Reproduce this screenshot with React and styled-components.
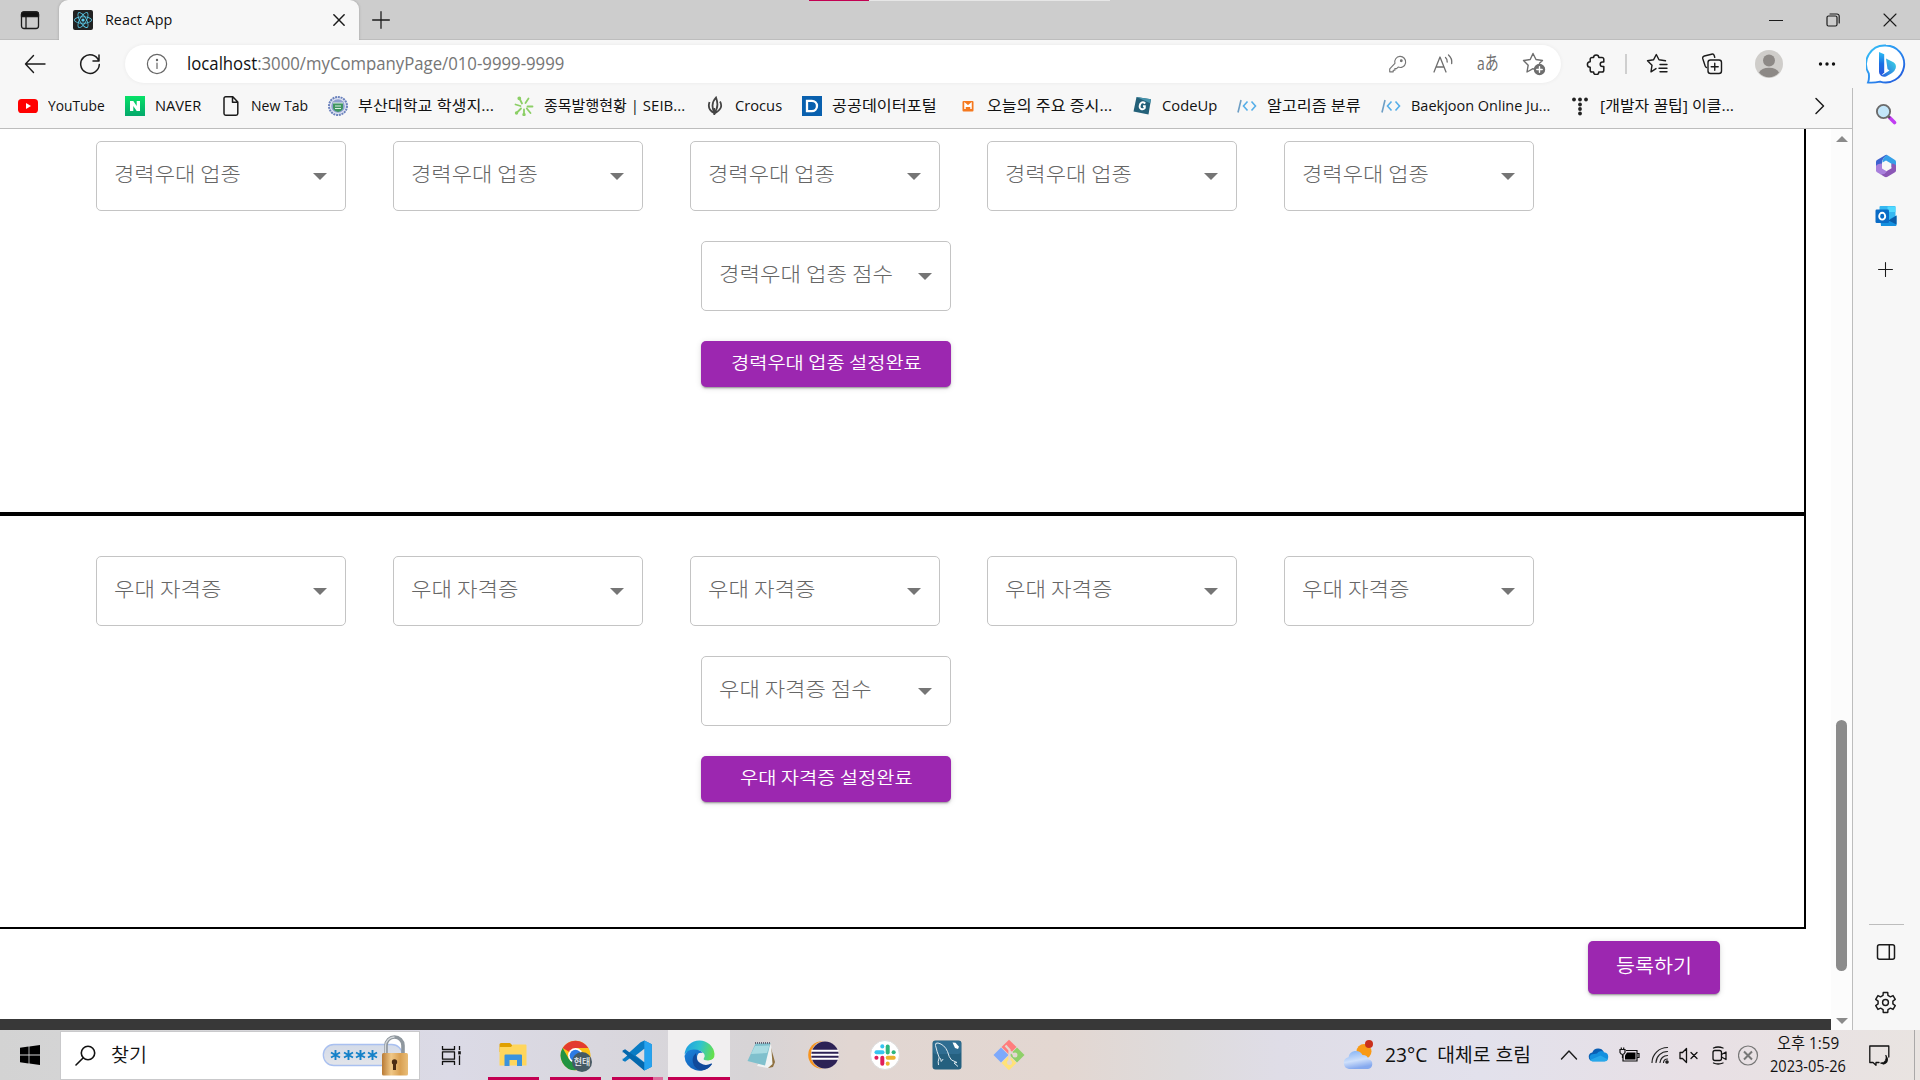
import React, { useLayoutEffect, useRef, useState } from "react";
import styled, { createGlobalStyle, css } from "styled-components";
import { FaReact } from "react-icons/fa";

const GlobalStyle = createGlobalStyle`
  * { box-sizing: border-box; }
  html, body { margin: 0; padding: 0; overflow: hidden; }
  body { font-family: "Open Sans", "Noto Sans CJK KR", sans-serif; color: #111; }
  svg { display: block; flex: none; }
`;

/* ---------- text that keeps to a given width ---------- */

const FitBox = styled.span`
  display: inline-block;
  flex: none;
  width: ${(p) => p.$w}px;
  white-space: pre;
  text-align: left;
  overflow: visible;
`;
const FitInner = styled.span`
  display: inline-block;
  transform-origin: 0 50%;
`;

function Fit({ w, children, className }) {
  const ref = useRef(null);
  const [scale, setScale] = useState(1);
  useLayoutEffect(() => {
    const natural = ref.current.offsetWidth;
    if (natural) setScale(w / natural);
  }, [w]);
  return (
    <FitBox $w={w} className={className}>
      <FitInner ref={ref} style={{ transform: `scaleX(${scale})` }}>
        {children}
      </FitInner>
    </FitBox>
  );
}

/* ---------- shell ---------- */

const Screen = styled.div`
  width: 1920px;
  height: 1080px;
  display: flex;
  flex-direction: column;
  background: #f7f7f7;
  overflow: hidden;
`;

const Slot = styled.div`
  flex: none;
  width: ${(p) => p.$w}px;
  height: ${(p) => (p.$h ? p.$h + "px" : "100%")};
  display: flex;
  align-items: center;
  justify-content: center;
`;

/* ---------- tab strip ---------- */

const TabStrip = styled.header`
  position: relative;
  height: 40px;
  flex: none;
  display: flex;
  padding: 0 2px 1px 0;
  background: #cdcdcd;
  box-shadow: inset 0 -1px 0 #bdbdbd;
`;
const LoadLine = styled.div`
  position: absolute;
  top: 0;
  left: 809px;
  width: 301px;
  height: 1px;
  background: linear-gradient(90deg, #c30052 60px, #e6e6e6 60px);
`;
const Tab = styled.div`
  width: 300px;
  height: 40px;
  background: #f7f7f7;
  border-radius: 9px 9px 0 0;
  display: flex;
  align-items: center;
  padding: 0 9px 0 14px;
  box-shadow: 0 0 3px rgba(0, 0, 0, 0.22);
  clip-path: inset(0 -4px 0 -4px);
`;
const ReactBadge = styled.div`
  width: 20px;
  height: 20px;
  margin-right: 12px;
  border-radius: 2px;
  background: #222;
  color: #5ccfee;
  display: grid;
  place-items: center;
`;
const TabTitle = styled.div`
  flex: 1;
  font-size: 15px;
  line-height: 20px;
  padding-bottom: 3px;
`;
const Grow = styled.div`
  flex: 1;
`;

/* ---------- address row ---------- */

const AddressRow = styled.div`
  height: 48px;
  flex: none;
  display: flex;
  align-items: center;
`;
const Omnibox = styled.div`
  width: 1437px;
  height: 38px;
  margin: 0 5px 0 15px;
  padding: 0 4px 0 1px;
  border-radius: 19px;
  background: #fff;
  box-shadow: 0 0 4px rgba(0, 0, 0, 0.06);
  display: flex;
  align-items: center;
`;
const Url = styled.div`
  flex: 1;
  font-size: 17.5px;
  line-height: 24px;
  color: #767676;
  padding-bottom: 3px;
  b {
    font-weight: 400;
    color: #111;
  }
`;
const Rule = styled.div`
  width: 2px;
  height: 20px;
  background: #cfcfcf;
`;
const Translate = styled.span`
  font: 400 19px/22px "Open Sans", "Noto Sans CJK JP", sans-serif;
  color: #6e6e6e;
  padding-bottom: 3px;
`;

/* ---------- body ---------- */

const Body = styled.div`
  flex: 1;
  min-height: 0;
  display: flex;
`;
const MainColumn = styled.div`
  width: 1852px;
  display: flex;
  flex-direction: column;
`;
const Bookmarks = styled.nav`
  height: 41px;
  flex: none;
  padding: 0 24px 4px 18px;
  display: flex;
  align-items: center;
  border-bottom: 1px solid #bdbdbd;
`;
const Bookmark = styled.div`
  flex: none;
  height: 36px;
  display: flex;
  align-items: center;
  gap: 10px;
  margin-right: 20px;
`;
const BookmarkLabel = styled(Fit)`
  font-size: 15px;
  line-height: 22px;
  color: #111;
  padding-bottom: 2px;
`;
const Fav = styled.div`
  width: 20px;
  height: 20px;
  flex: none;
  display: grid;
  place-items: center;
  background: ${(p) => p.$bg || "none"};
`;

const Viewport = styled.div`
  flex: 1;
  min-height: 0;
  display: flex;
  background: #fff;
`;
const Page = styled.main`
  width: 1831px;
  height: 100%;
  overflow: hidden;
  display: flex;
  flex-direction: column;
`;
const Panel = styled.section`
  flex: none;
  width: 1806px;
  height: ${(p) => p.$h}px;
  margin-top: ${(p) => p.$shift || 0}px;
  padding-top: 40px;
  border: 2px solid #000;
  border-left: none;
  display: flex;
  flex-direction: column;
  align-items: flex-start;
`;
const SelectRow = styled.div`
  display: flex;
  gap: 47px;
  margin-left: 96px;
`;
const CenterStack = styled.div`
  display: flex;
  flex-direction: column;
  gap: 30px;
  margin: 30px 0 0 701px;
`;
const SelectBox = styled.div`
  width: 250px;
  height: 70px;
  padding: 0 18px 0 17px;
  border: 1px solid #c4c4c4;
  border-radius: 5px;
  display: flex;
  justify-content: space-between;
  align-items: center;
  color: #666;
`;
const SelectLabel = styled(Fit)`
  font-family: "Noto Sans CJK KR", sans-serif;
  font-weight: 300;
  font-size: 20px;
  line-height: 28px;
  padding-bottom: 4px;
`;
const Caret = styled.i`
  width: 0;
  height: 0;
  margin-top: 1px;
  border: 7px solid transparent;
  border-top-color: #757575;
  border-bottom: none;
`;
const PurpleButton = styled.button`
  width: ${(p) => p.$w}px;
  height: ${(p) => p.$h}px;
  padding: 0 0 5px;
  border: none;
  border-radius: 5px;
  background: #9c27b0;
  color: #fff;
  font-family: "Noto Sans CJK KR", sans-serif;
  font-weight: 350;
  font-size: ${(p) => p.$fs}px;
  line-height: 26px;
  display: flex;
  align-items: center;
  justify-content: center;
  box-shadow: 0 3px 1px -2px rgba(0, 0, 0, 0.2), 0 2px 2px 0 rgba(0, 0, 0, 0.14),
    0 1px 6px 0 rgba(0, 0, 0, 0.12);
`;
const SubmitRow = styled.div`
  display: flex;
  margin: 12px 0 0 1588px;
`;
const PageFooter = styled.footer`
  margin-top: auto;
  height: 11px;
  flex: none;
  background: #383838;
`;
const Scrollbar = styled.div`
  width: 21px;
  background: #fcfcfc;
  display: flex;
  flex-direction: column;
  align-items: center;
  padding: 7px 0 6px;
`;
const Arrow = styled.i`
  width: 0;
  height: 0;
  border: 6px solid transparent;
  ${(p) =>
    p.$up
      ? css`
          border-bottom-color: #8b8b8b;
          border-top: none;
        `
      : css`
          border-top-color: #8b8b8b;
          border-bottom: none;
        `}
`;
const Thumb = styled.div`
  width: 11px;
  height: 251px;
  margin: auto 0 47px;
  border-radius: 6px;
  background: #8b8b8b;
`;
const SideBar = styled.aside`
  width: 68px;
  border-left: 1px solid #bdbdbd;
  display: flex;
  flex-direction: column;
  padding-bottom: 5px;
`;
const SideRule = styled.div`
  width: 35px;
  height: 1px;
  margin: auto auto 0;
  background: #bdbdbd;
`;

/* ---------- taskbar ---------- */

const Taskbar = styled.footer`
  height: 50px;
  flex: none;
  display: flex;
  align-items: center;
  background: linear-gradient(
    90deg,
    #d3d3d3 0,
    #d6d6d8 180px,
    #dbdae6 450px,
    #d9d7de 600px,
    #d7d4d6 750px,
    #e1d6d2 850px,
    #e3d7d1 1060px,
    #dedbdc 1180px,
    #dfdde7 1280px,
    #e2e1ec 1480px,
    #e8e0e5 1700px,
    #e9e4e1 1920px
  );
`;
const SearchBox = styled.div`
  width: 360px;
  height: 49px;
  margin-top: 1px;
  border: 1px solid #c9c9cb;
  background: #fff;
  display: flex;
  align-items: center;
  padding: 0 10px 0 14px;
`;
const SearchText = styled.div`
  flex: 1;
  margin-left: 15px;
  font: 350 19px/26px "Noto Sans CJK KR", sans-serif;
  padding-bottom: 4px;
`;
const AppCell = styled.div`
  width: 62px;
  height: 50px;
  flex: none;
  position: relative;
  display: grid;
  place-items: center;
  background: ${(p) => (p.$active ? "#f1eff0" : "none")};
`;
const RunMark = styled.div`
  position: absolute;
  bottom: 0;
  left: ${(p) => (p.$wide ? 0 : 6)}px;
  right: ${(p) => (p.$wide ? 0 : 5)}px;
  height: 3px;
  background: ${(p) =>
    p.$split ? "linear-gradient(90deg, #c30052 41px, #dd6c9c 41px)" : "#c30052"};
`;
const ChromeTag = styled.span`
  position: absolute;
  left: 28px;
  top: 22px;
  width: 20px;
  height: 20px;
  border-radius: 50%;
  background: #455a64;
  color: #e8ecee;
  font: 500 9px/19px "Noto Sans CJK KR", sans-serif;
  text-align: center;
`;
const Weather = styled.div`
  display: flex;
  align-items: center;
  gap: 12px;
  margin-right: 20px;
  font-size: 19.5px;
  line-height: 28px;
`;
const Clock = styled.div`
  width: 84px;
  margin-left: 3px;
  display: flex;
  flex-direction: column;
  align-items: center;
  font-size: 15.5px;
  line-height: 23px;
`;
const DesktopEdge = styled.div`
  width: 1px;
  height: 50px;
  margin: 0 5px 0 6px;
  background: #aaa8a8;
`;

/* ---------- icons ---------- */

const Line = ({ s = 20, w = 1.3, c = "#1b1b1b", vb = 20, children, ...rest }) => (
  <svg
    width={s}
    height={s}
    viewBox={`0 0 ${vb} ${vb}`}
    fill="none"
    stroke={c}
    strokeWidth={w}
    strokeLinecap="round"
    strokeLinejoin="round"
    {...rest}
  >
    {children}
  </svg>
);

const TabActions = () => (
  <Line>
    <rect x="1.5" y="2" width="17" height="16.5" rx="2.5" />
    <path d="M1.5 6.5V4.5A2.5 2.5 0 0 1 4 2h12a2.5 2.5 0 0 1 2.500 2.500v2Z" fill="#111" />
    <path d="M6 7v11" />
  </Line>
);
const Back = () => (
  <Line s={22} vb={22} w={1.4}>
    <path d="M21 11H1.500M9.500 2.500 1.500 11l8 8.500" />
  </Line>
);
const Refresh = () => (
  <Line s={22} vb={22} w={1.5}>
    <path d="M19.800 8A9.300 9.300 0 1 0 20.300 11.500M20 2v6h-6" />
  </Line>
);
const Info = () => (
  <Line s={22} vb={22} w={1.2} c="#666">
    <circle cx="11" cy="11" r="9.600" />
    <path d="M11 10v5.500" />
    <circle cx="11" cy="7" r=".6" fill="#666" />
  </Line>
);
const Key = () => (
  <Line s={19} c="#767676" w={1.200}>
    <path d="M12.500 1.500a5.800 5.800 0 1 1-1.800 11.200L9 14.300H7.200V16H5.500v1.700H1.800v-3.200l5.500-5.600A5.800 5.800 0 0 1 12.500 1.500Z" />
    <circle cx="14" cy="6" r=".9" fill="#767676" />
  </Line>
);
const ReadAloud = () => (
  <Line c="#6e6e6e" w={1.300}>
    <path d="M1 18 7 3l6 15M3 13h8M12.500 3.500q2 1.700 1.700 4.500M15.500 1q3.800 3.300 3.200 8.500" />
  </Line>
);
const StarAdd = () => (
  <Line s={24} vb={24} c="#6e6e6e" w={1.400}>
    <path d="M12.500 17.500 11 16.700 5 20l1.200-6.800L1.500 8.500l6.700-1L11 1.500l3 6 6.500 1-3 2.800" />
    <circle cx="17.500" cy="17.500" r="5" fill="#6e6e6e" />
    <path d="M17.500 14.800v5.400M14.800 17.500h5.400" stroke="#fff" />
  </Line>
);
const Puzzle = () => (
  <Line s={22} vb={22} w={1.500}>
    <path d="M7 4.500h1.600a2.600 2.600 0 0 1 5.200 0H17A1.800 1.800 0 0 1 18.800 6.300V9h-1.300a2.300 2.300 0 0 0 0 4.600h1.300v3.600A1.800 1.800 0 0 1 17 19h-3.200a2.600 2.600 0 0 1-5.200 0H7a1.800 1.800 0 0 1-1.800-1.800V14.300a2.800 2.800 0 0 1 0-5.600V6.300A1.800 1.800 0 0 1 7 4.500Z" />
  </Line>
);
const Favorites = () => (
  <Line s={22} vb={22} w={1.400}>
    <path d="M10 15.600 5 18.800l1-6.600L1.500 7.800l6-1L10.300 1.500 13 6.800l6.500 1M14 11.500h7M13 15.200h8M14 18.800h7" />
  </Line>
);
const Collections = () => (
  <Line s={22} vb={22} w={1.400}>
    <path d="M5.500 14.500A2.500 2.500 0 0 1 4 12.500L1.800 5.800A2.300 2.300 0 0 1 3.300 3L10.500 1.200a2.300 2.300 0 0 1 2.800 1.600l.4 1.500" />
    <rect x="7" y="7" width="13.500" height="13.500" rx="2.500" />
    <path d="M13.750 10.200v7M10.200 13.750h7" />
  </Line>
);
const Avatar = () => (
  <svg width="28" height="28" viewBox="0 0 28 28">
    <circle cx="14" cy="14" r="14" fill="#cfcdca" />
    <circle cx="14" cy="10.500" r="6" fill="#8d8986" />
    <path d="M4 22.500a10.500 7 0 0 1 20 0A13 13 0 0 1 4 22.500Z" fill="#8d8986" />
  </svg>
);
const Dots = () => (
  <svg width="18" height="4" viewBox="0 0 18 4" fill="#111">
    <circle cx="2.500" cy="2" r="1.700" />
    <circle cx="9" cy="2" r="1.700" />
    <circle cx="15.500" cy="2" r="1.700" />
  </svg>
);
const Bing = () => (
  <svg width="40" height="40" viewBox="0 0 40 40">
    <defs>
      <linearGradient id="bingRing" x1="0" y1="0" x2="1" y2="1">
        <stop offset="0" stopColor="#36c5f6" />
        <stop offset=".5" stopColor="#2a8cf0" />
        <stop offset="1" stopColor="#2353d8" />
      </linearGradient>
      <linearGradient id="bingB" x1="0" y1="0" x2="0" y2="1">
        <stop offset="0" stopColor="#2fc0f4" />
        <stop offset=".5" stopColor="#1b6fe4" />
        <stop offset="1" stopColor="#2a56dc" />
      </linearGradient>
      <linearGradient id="bingC" x1="0" y1="1" x2="1" y2="0">
        <stop offset="0" stopColor="#2558de" />
        <stop offset="1" stopColor="#3edbe6" />
      </linearGradient>
    </defs>
    <path d="M20 1.500A18.500 18.500 0 1 1 14 37.600Q8 39 2 38.500q1.500-3.500.8-9A18.500 18.500 0 0 1 20 1.500Z" fill="#fff" stroke="url(#bingRing)" strokeWidth="1.900" />
    <path d="M13 8l5.200 2.200v18.300L15.200 31.500q-2.200-.8-2.200-3.500Z" fill="url(#bingB)" />
    <path d="M20 14.500l7.500 3.800q3.200 2 2.200 6-1 3.200-3.700 4.700L20.500 32.300q-4 1.500-6.500-1.500 2.200.6 4-.8l5.500-3.500-2-1.500Z" fill="url(#bingC)" />
  </svg>
);
const Cross = ({ s = 13, w = 1.200 }) => (
  <Line s={s} vb={14} w={w}>
    <path d="M1 1l12 12M13 1 1 13" />
  </Line>
);
const Plus = ({ s = 17 }) => (
  <Line s={s} vb={17} w={1.200}>
    <path d="M8.500.6v15.800M.6 8.500h15.800" />
  </Line>
);
const Restore = () => (
  <Line s={14} vb={14} w={1.200}>
    <rect x="1" y="3" width="10" height="10" rx="1.500" />
    <path d="M4 1h7a2.200 2.200 0 0 1 2.200 2.200V10" />
  </Line>
);

/* favicons */
const YouTube = () => (
  <svg width="20" height="20" viewBox="0 0 20 20">
    <rect y="3" width="20" height="14" rx="3.600" fill="#f00" />
    <path d="M8 7l5 3-5 3Z" fill="#fff" />
  </svg>
);
const Naver = () => (
  <svg width="10" height="10" viewBox="0 0 10 10">
    <path d="M0 0h3.300l3.400 5V0H10v10H6.700L3.300 5v5H0Z" fill="#fff" />
  </svg>
);
const PageIcon = () => (
  <Line w={1.500}>
    <path d="M4.500.8h7.300l5 5.200v11.500a1.700 1.700 0 0 1-1.700 1.700H4.700A1.700 1.700 0 0 1 3 17.500V2.500A1.700 1.700 0 0 1 4.700.8ZM11.500 1v5.300h5" />
  </Line>
);
const Univ = () => (
  <svg width="20" height="20" viewBox="0 0 20 20">
    <circle cx="10" cy="10" r="9" fill="#dfe4f2" stroke="#6b82bd" strokeWidth="2" strokeDasharray="2 .8" />
    <circle cx="10" cy="10" r="6.800" fill="#8fa0cf" />
    <path d="M5 7h10v4.500q0 3-5 4.500-5-1.500-5-4.500Z" fill="#3f9560" />
    <path d="M5 7h10M7 10h6M7 12.500h6" stroke="#dcefe2" strokeWidth="1" />
  </svg>
);
const Splash = () => (
  <svg width="20" height="20" viewBox="0 0 20 20" stroke="#8ccf66" strokeWidth="1.800" strokeLinecap="round" fill="#7cc84e">
    <path d="M8 7.500 5.500 2.500M11.500 7l3-4.500M6.500 10 1.500 8.500M7 12.500l-4.500 4.500M10 13.500v5.500M12.800 12.500l3.700 4.500M13.500 10.500h5" fill="none" />
    <circle cx="5.300" cy="2.300" r="1" />
    <circle cx="2.500" cy="17" r=".8" />
    <circle cx="10" cy="18.500" r=".8" />
  </svg>
);
const Crocus = () => (
  <svg width="20" height="20" viewBox="0 0 20 20" fill="none" stroke="#444" strokeWidth="1.800">
    <path d="M11 1.500Q5 8 9.300 16.500 14.500 11 11 1.500ZM4.500 6q-2.500 7.500 4.500 11M15 5.500q4 7-5.500 12" />
    <path d="M9.300 12v7" />
  </svg>
);
const DataPortal = () => (
  <svg width="14" height="14" viewBox="0 0 14 14">
    <path d="M2 1.800h4.800a5.200 5.200 0 0 1 0 10.400H2Z" fill="none" stroke="#fff" strokeWidth="2.300" />
  </svg>
);
const MNews = () => (
  <svg width="20" height="20" viewBox="0 0 20 20">
    <rect x="5.500" y="5" width="11" height="10.500" rx="1" fill="#f5791f" />
    <path d="M8 13V7.500l3 2.500 3-2.500V13M8 10.300h6" stroke="#fff" strokeWidth="1.500" fill="none" />
  </svg>
);
const CodeUp = () => (
  <svg width="20" height="20" viewBox="0 0 20 20">
    <path d="M4.500 1l14.500 2.300L16.500 18.500 1.500 15.500Z" fill="#236078" />
    <path d="M4.500 1l14.500 2.300-.8 4Z" fill="#4793ac" />
    <path d="M13.300 7.500Q10.500 5 8.500 7.500q-2 4 .5 5.500 2.500 1 3.800-1V10.200H11" stroke="#fff" strokeWidth="1.900" fill="none" />
  </svg>
);
const Baekjoon = () => (
  <svg width="20" height="20" viewBox="0 0 20 20" fill="none" strokeWidth="1.600">
    <path d="M4 4 1 16.500" stroke="#6d9ec4" />
    <path d="M10.500 5.500 6.500 10l4 4.500M14.500 5.500l4 4.500-4 4.500" stroke="#55aee8" />
  </svg>
);
const Tistory = () => (
  <svg width="20" height="20" viewBox="0 0 20 20" fill="#222">
    {[[4, 4], [10, 4], [16, 4], [10, 9], [10, 13.500], [10, 18]].map(([x, y]) => (
      <circle key={x + "-" + y} cx={x} cy={y - 0.500} r="1.900" />
    ))}
  </svg>
);

/* sidebar icons */
const Magnifier = () => (
  <svg width="22" height="22" viewBox="0 0 22 22">
    <path d="M14.500 14.500l5 5" stroke="#c13df2" strokeWidth="3.600" strokeLinecap="round" />
    <path d="M12.500 12.500l2.500 2.500" stroke="#555" strokeWidth="2" />
    <circle cx="8.500" cy="8.500" r="6.600" fill="#c3e6fa" stroke="#6b6b6b" strokeWidth="1.900" />
  </svg>
);
const M365 = () => (
  <svg width="22" height="24" viewBox="0 0 22 24">
    <path d="M10.500 1 2 6Q1 6.700 1 8v8.500q3.200 1.500 6-.8V8.500Q7.500 3 13 1.300 11.700.4 10.500 1Z" fill="#3c62cf" />
    <path d="M11 1.500Q7.500 4 7.500 8.500l3.500-2 5.500 3.300V13q3 2.500 4.500 4V8q0-1.300-1-2l-7-4.500Q12 .8 11 1.500Z" fill="#35a0e8" />
    <path d="M21 12v4.500q0 1-1 1.700l-7.500 4.600q-1.500.8-3 0L5 20q4 .8 6-2.500l5.500-3.200V9.500Q21 10 21 12Z" fill="#8b57b6" />
    <path d="M1 12q1-2.500 6-2.500v5l5 3q-2.500 3.500-7 2.500L2 18.200q-1-.7-1-1.700Z" fill="#a87fdc" />
    <circle cx="11" cy="12" r="3.700" fill="#f7f7f7" />
  </svg>
);
const Outlook = () => (
  <svg width="22" height="22" viewBox="0 0 22 22">
    <rect x="4.500" y="1" width="16" height="13" rx="1" fill="#35b8f1" />
    <path d="M12.500 1.500h8V7h-8Z" fill="#50d9ff" />
    <path d="M5 11l8 4 8.500-4.500V20a1 1 0 0 1-1 1H6Z" fill="#1490df" />
    <path d="M13.500 15.500l8-5v9Z" fill="#0a5ca8" />
    <rect x=".5" y="4.500" width="13.500" height="13.500" rx="1.200" fill="#0a6cc6" />
    <ellipse cx="7.200" cy="11.200" rx="3" ry="3.400" fill="none" stroke="#fff" strokeWidth="1.900" />
  </svg>
);
const SidePanel = () => (
  <Line s={20} vb={20} w={1.500}>
    <rect x="1.500" y="2.800" width="17" height="14.400" rx="2" />
    <path d="M13.300 3v14" />
  </Line>
);
const gearPath = (() => {
  const pts = [];
  for (let i = 0; i < 6; i++) {
    const a = (i * Math.PI) / 3 - Math.PI / 2;
    const at = (r, d) => `${(11 + r * Math.cos(a + d)).toFixed(2)} ${(11 + r * Math.sin(a + d)).toFixed(2)}`;
    pts.push(at(9.800, -0.220), at(9.800, 0.220), at(7.200, 0.330), at(7.200, 0.710));
  }
  return "M" + pts.join("L") + "Z";
})();
const Gear = () => (
  <Line s={23} vb={22} w={1.400}>
    <path d={gearPath} />
    <circle cx="11" cy="11" r="2.800" />
  </Line>
);

/* taskbar icons */
const Windows = () => (
  <svg width="20" height="20" viewBox="0 0 20 20" fill="#000">
    <path d="M0 2.800 8.600 1.600V9.600H0ZM9.400 1.500 20 0V9.600H9.400ZM0 10.400H8.600V18.400L0 17.200ZM9.400 10.400H20V20L9.400 18.500Z" />
  </svg>
);
const SearchIcon = () => (
  <Line s={21} vb={21} w={1.600} c="#111">
    <circle cx="13" cy="8" r="6.700" />
    <path d="M8.300 12.700 1 20" />
  </Line>
);
const LockArt = () => (
  <svg width="87" height="42" viewBox="0 0 87 42">
    <defs>
      <linearGradient id="lockBody" x1="0" x2="1">
        <stop offset="0" stopColor="#b87a35" />
        <stop offset=".35" stopColor="#f0c887" />
        <stop offset=".7" stopColor="#d9a052" />
        <stop offset="1" stopColor="#e9bd78" />
      </linearGradient>
      <linearGradient id="pill" x1="0" y1="0" x2="0" y2="1">
        <stop offset="0" stopColor="#d4dbe8" />
        <stop offset="1" stopColor="#e3e5ea" />
      </linearGradient>
    </defs>
    <rect x="1.300" y="9.500" width="79" height="21" rx="10.500" fill="url(#pill)" stroke="#a9c0f0" strokeWidth="1.300" />
    {[13.500, 26.500, 38.500, 50.500].map((x) => (
      <g key={x} stroke="#1481c8" strokeWidth="1.900">
        <path d={`M${x} 15v10M${x - 4.500} 17.500l9 5M${x - 4.500} 22.500l9-5`} />
      </g>
    ))}
    <path d="M64 18.500v-8a8.500 8.500 0 0 1 17 0v8" fill="none" stroke="#8f979e" strokeWidth="3.600" />
    <path d="M63.500 18.500v-8a9 9 0 0 1 9-8.500" fill="none" stroke="#d6dade" strokeWidth="1.300" />
    <rect x="60" y="18" width="26" height="22.500" rx="1.500" fill="url(#lockBody)" />
    <circle cx="72.500" cy="27" r="2.700" fill="#4c2c12" />
    <path d="M71 27h3v8h-3Z" fill="#4c2c12" />
  </svg>
);
const TaskView = () => (
  <Line s={21} vb={21} w={1.300} c="#111" strokeLinecap="butt">
    <path d="M1.500 1v3.500H13.500V1M1.500 20v-3.500H13.500V20M1.500 6.800H13.500v7.400H1.500ZM18.500 1v4M18.500 10.500V20" />
    <path d="M18.500 6.200v3.200" strokeWidth="2.600" />
  </Line>
);
const Folder = () => (
  <svg width="30" height="30" viewBox="0 0 30 30">
    <path d="M1.500 4.500q0-1.500 1.500-1.500h9l2.500 2.500V12H1.500Z" fill="#e0a000" />
    <path d="M1.500 7H13l2-2.500h12.500q1 0 1 1V25.500h-27Z" fill="#ffd65c" />
    <path d="M6.500 26V15.500q0-1 1-1H23q1 0 1 1V26h-5v-6h-7.500v6Z" fill="#3b93dd" />
  </svg>
);
const Chrome = () => (
  <svg width="31" height="31" viewBox="0 0 48 48">
    <circle cx="24" cy="24" r="23" fill="#fbc116" />
    <path d="M24 24 4.080 12.500A23 23 0 0 1 43.900 12.500H24Z" fill="#e33b2e" />
    <path d="M4.080 12.500A23 23 0 0 0 24 47l10-17.300L14 29.700Z" fill="#229342" />
    <path d="M43.900 12.500H24l10 17.300L24 47A23 23 0 0 0 43.900 12.500Z" fill="#fbc116" />
    <circle cx="24" cy="24" r="11.500" fill="#fff" />
    <circle cx="24" cy="24" r="9" fill="#2c7be5" />
  </svg>
);
const VSCode = () => (
  <svg width="31" height="31" viewBox="0 0 100 100">
    <path d="M72 2 96 13.500V86.500L72 98 28 57 10 70.500 2 66.500V60L60 7Z" fill="#0a7cc4" />
    <path d="M2 33.500 10 29.500 72 74V98L2 40Z" fill="#0468ad" />
    <path d="M72 2 96 13.500V86.500L72 98Z" fill="#26a3f0" />
    <path d="M72 28 44 50 72 72Z" fill="#dcdbe1" />
    <path d="M2 38 17 50 2 62Z" fill="#dcdbe1" />
  </svg>
);
const Edge = () => (
  <svg width="31" height="31" viewBox="0 0 31 31">
    <defs>
      <linearGradient id="edgeTop" x1="0" y1=".3" x2="1" y2=".5">
        <stop offset="0" stopColor="#1f9fe3" />
        <stop offset=".5" stopColor="#30c4cd" />
        <stop offset="1" stopColor="#65e04c" />
      </linearGradient>
      <linearGradient id="edgeLow" x1="0" y1="0" x2="1" y2="1">
        <stop offset="0" stopColor="#1b84dc" />
        <stop offset="1" stopColor="#0f4fa8" />
      </linearGradient>
    </defs>
    <path d="M.6 14.500A15 15 0 0 1 30.500 14q.3 6-6.500 6.500-3.500 0-4.800-1.300 2-2 1-4.700-1.800-4-7-4.500Q4.500 9.500.6 14.500Z" fill="url(#edgeTop)" />
    <path d="M.5 16Q2.500 9 10.500 9.500q6 .3 8.300 3.500-4-.5-5.500 3-1.500 7 5.500 9.500 4 1.300 9-1.300A15 15 0 0 1 .5 16Z" fill="url(#edgeLow)" />
    <path d="M12 13Q6.500 18 10 25.500q2.500 4 7 5 7-.5 11-6.300.2-1-.8-.6-4 2-8 1Q12 22 12.500 16Z" fill="#104a9b" />
    <path d="M13.500 17q-.5-4.500 4-4.200 3.800.6 2.800 4.200l-1.200 2.200q1.500 2 5.500 1.700 3.500-.5 5-2-1 3.500-4.500 4.800-8 2.300-11.600-6.700Z" fill="#f1eff0" />
  </svg>
);
const Notepad = () => (
  <svg width="30" height="30" viewBox="0 0 30 30">
    <path d="M24 4.500 29 22l-2 5-5 1Z" fill="#8f7140" />
    <path d="M25 4l1.500 20-4.500 4-11-2Z" fill="#f0f3f3" />
    <path d="M9.500 3.500 24.500 3 19 25.500 1.500 21Z" fill="#7fc0cd" />
    <path d="M9 6 23.500 5.500 21 13 5 14Z" fill="#a9dbe2" />
    <path d="M9 3h16" stroke="#667" strokeWidth="1.800" strokeDasharray="1 1" />
  </svg>
);
const Eclipse = () => (
  <svg width="31" height="28" viewBox="0 0 31 28">
    <ellipse cx="14" cy="14" rx="13.800" ry="13.800" fill="#f7941e" />
    <circle cx="17" cy="14" r="14" fill="#e0d6d5" />
    <circle cx="17" cy="14" r="13.600" fill="#2c2255" />
    <path d="M3.500 9.800h27M3 13.800h28M3.500 17.800h27" stroke="#fff" strokeWidth="1.900" />
  </svg>
);
const Slack = () => (
  <svg width="30" height="30" viewBox="0 0 30 30">
    <circle cx="15" cy="15" r="14.500" fill="#fff" stroke="#ddd" />
    <g strokeWidth="4" strokeLinecap="round">
      <path d="M6.500 12.300h6" stroke="#36c5f0" />
      <path d="M12.300 6.300v.1" stroke="#36c5f0" />
      <path d="M17.700 6.500v6" stroke="#2eb67d" />
      <path d="M23.600 12.300h.1" stroke="#2eb67d" />
      <path d="M17.700 17.700h6" stroke="#ecb22e" />
      <path d="M17.700 23.600v.1" stroke="#ecb22e" />
      <path d="M12.300 17.700v6" stroke="#e01e5a" />
      <path d="M6.400 17.700h.1" stroke="#e01e5a" />
    </g>
  </svg>
);
const MySQL = () => (
  <svg width="30" height="30" viewBox="0 0 30 30">
    <rect x=".5" y=".5" width="29" height="29" rx="3" fill="#25607f" />
    <rect x="1" y="1" width="28" height="13" rx="3" fill="#2f6d91" />
    <path d="M6.500 25q-1-3 .7-7.500Q5 12 3.500 5.500 3 2.500 6 3q6.500 1.500 9.500 8.500 1.500 6 4 8.500l5.500 2.500-3 .5 4 3.500M7.200 17.500q2 1 2 4l2-2.500" fill="none" stroke="#dfeaf0" strokeWidth="1" />
    <path d="M20.500 2.500l3 .3 3.500 4-1 2.200-3-1Z" fill="#fff" />
  </svg>
);
const GitDiamond = () => (
  <svg width="32" height="32" viewBox="0 0 32 32">
    <path d="M16 .8 23.500 8 16 15.500 8.500 8Z" fill="#ff7d7d" />
    <path d="M24 8.500 31.500 16 24 23.500 16.500 16Z" fill="#8fd069" />
    <path d="M16 16.500 23.500 24 16 31.300 8.500 24Z" fill="#ffe278" />
    <path d="M8 8.500 15.500 16 8 23.500.5 16Z" fill="#7da9fb" />
    <path d="M12.500 6.500 16.500 11v13M16.500 12l5 4" fill="none" stroke="#e3d7d1" strokeWidth="2.200" />
    <circle cx="16.500" cy="23.500" r="2.500" fill="#e3d7d1" />
    <circle cx="22" cy="16" r="2.500" fill="#e3d7d1" />
  </svg>
);
const Cloudy = () => (
  <svg width="30" height="30" viewBox="0 0 30 30">
    <defs>
      <linearGradient id="cloud" x1="0" y1="0" x2=".3" y2="1">
        <stop offset="0" stopColor="#7fb0f4" />
        <stop offset=".6" stopColor="#cfe0fb" />
        <stop offset="1" stopColor="#86a9ee" />
      </linearGradient>
    </defs>
    <circle cx="21" cy="11.500" r="7.500" fill="#f99a16" />
    <path d="M6 29a6 6 0 0 1-.5-11.800A7.500 7.500 0 0 1 19.500 15a6 6 0 0 1 6 4.200A5 5 0 0 1 25 29Z" fill="url(#cloud)" />
    <circle cx="26" cy="4" r="4" fill="#c9301c" />
  </svg>
);
const OneDrive = () => (
  <svg width="21" height="14" viewBox="0 0 21 14">
    <path d="M4.500 13A4.300 4.300 0 0 1 4.300 4.500 6.300 6.300 0 0 1 15.800 4l-6 6Z" fill="#0a5fb4" />
    <path d="M9 5.500a4.500 4.500 0 0 1 7-1.300A4.600 4.600 0 0 1 16.500 13.300H4.500A4 4 0 0 1 3 6.500Z" fill="#1490df" />
    <path d="M2 12 12.500 7.500l7.500 4q-1 2-3.500 2H4.500Q3 13.300 2 12Z" fill="#28a8ea" />
  </svg>
);
const Battery = () => (
  <svg width="22" height="16" viewBox="0 0 22 16" fill="none" stroke="#111" strokeWidth="1.200">
    <path d="M7 3.500h11v10.500H4V8M18.500 6.500h1.500v4h-1.500" />
    <path d="M8 5.500h8.500v7H6V8.500Z" fill="#000" stroke="none" />
    <path d="M1 2.500h5v3q-1 2-2.500 2T1 5.500ZM2.300.5v2M4.700.5v2M3.500 7.500V11" />
  </svg>
);
const Wifi = () => (
  <Line s={18} vb={18} w={1.200} c="#222">
    <path d="M1 16.500A15.500 15.500 0 0 1 16.500 1.500M5 16.500A11.500 11.500 0 0 1 16.500 5.500M9 16.500a7.500 7.500 0 0 1 7.500-7M12.500 16.500a4 4 0 0 1 4-3.500" />
    <circle cx="16" cy="16" r="1.200" fill="#111" />
  </Line>
);
const Mute = () => (
  <Line s={19} vb={19} w={1.300} c="#111">
    <path d="M1 6.500h2.500L7.500 2.500v14l-4-4H1ZM12 6.500l6 6M18 6.500l-6 6" />
  </Line>
);
const MeetCam = () => (
  <Line s={19} vb={19} w={1.300} c="#111">
    <rect x="3" y="4.500" width="8.500" height="10" rx="2" />
    <path d="M11.500 8.500 16 6v7.500l-4.500-2.500M3.500 2Q8 0 13 2M3.500 17Q8 19 13 17" />
  </Line>
);
const Offline = () => (
  <svg width="21" height="21" viewBox="0 0 21 21" fill="none" stroke="#777">
    <circle cx="10" cy="10.500" r="9.500" strokeWidth="1.200" />
    <path d="M6 6.500l8 8M14 6.500l-8 8" strokeWidth="2" />
  </svg>
);
const Notice = () => (
  <Line s={21} vb={21} w={1.300} c="#111">
    <path d="M10 17.500H7v2.800l-3-2.800H.8V1h19v11" />
    <path d="M17 10.500q3 3.500.8 7-2.800 3-6.300.6 3.500-.2 4.800-2.400 1.300-2.400.7-5.200Z" fill="#111" strokeWidth=".8" />
  </Line>
);

/* ---------- data ---------- */

const bookmarks = [
  { label: "YouTube", w: 57, icon: <YouTube /> },
  { label: "NAVER", w: 46, icon: <Naver />, bg: "linear-gradient(#07e268, #04a86b)" },
  { label: "New Tab", w: 57, icon: <PageIcon /> },
  { label: "부산대학교 학생지...", w: 136, icon: <Univ /> },
  { label: "종목발행현황 | SEIB...", w: 141, icon: <Splash /> },
  { label: "Crocus", w: 47, icon: <Crocus /> },
  { label: "공공데이터포털", w: 105, icon: <DataPortal />, bg: "#0960ae" },
  { label: "오늘의 주요 증시...", w: 125, icon: <MNews /> },
  { label: "CodeUp", w: 55, icon: <CodeUp /> },
  { label: "알고리즘 분류", w: 94, icon: <Baekjoon /> },
  { label: "Baekjoon Online Ju...", w: 139, icon: <Baekjoon /> },
  { label: "[개발자 꿀팁] 이클...", w: 134, icon: <Tistory /> },
];

const apps = [
  { id: "files", icon: <Folder />, run: true },
  { id: "chrome", icon: <Chrome />, run: true, tag: "현태" },
  { id: "code", icon: <VSCode />, run: true, split: true },
  { id: "edge", icon: <Edge />, run: true, active: true },
  { id: "notepad", icon: <Notepad /> },
  { id: "eclipse", icon: <Eclipse /> },
  { id: "slack", icon: <Slack /> },
  { id: "mysql", icon: <MySQL /> },
  { id: "git", icon: <GitDiamond /> },
];

function Select({ label, w }) {
  return (
    <SelectBox>
      <SelectLabel w={w}>{label}</SelectLabel>
      <Caret />
    </SelectBox>
  );
}

function Preference({ label, labelW, scoreW, doneW, height, shift }) {
  return (
    <Panel $h={height} $shift={shift}>
      <SelectRow>
        {[0, 1, 2, 3, 4].map((i) => (
          <Select key={i} label={label} w={labelW} />
        ))}
      </SelectRow>
      <CenterStack>
        <Select label={`${label} 점수`} w={scoreW} />
        <PurpleButton $w={250} $h={46} $fs={17.5}>
          <Fit w={doneW}>{`${label} 설정완료`}</Fit>
        </PurpleButton>
      </CenterStack>
    </Panel>
  );
}

export default function App() {
  return (
    <Screen>
      <GlobalStyle />
      <TabStrip>
        <LoadLine />
        <Slot $w={59}><TabActions /></Slot>
        <Tab>
          <ReactBadge><FaReact size={18} /></ReactBadge>
          <TabTitle><Fit w={67}>React App</Fit></TabTitle>
          <Slot $w={22}><Cross s={12} w={1.700} /></Slot>
        </Tab>
        <Slot $w={43}><Plus s={18} /></Slot>
        <Grow />
        <Slot $w={57}>
          <Line s={14} vb={14} w={1.200}><path d="M.5 7.500h13" /></Line>
        </Slot>
        <Slot $w={57}><Restore /></Slot>
        <Slot $w={57}><Cross s={14} w={1.100} /></Slot>
      </TabStrip>

      <AddressRow>
        <Slot $w={70}><Back /></Slot>
        <Slot $w={40}><Refresh /></Slot>
        <Omnibox>
          <Slot $w={61}><Info /></Slot>
          <Url>
            <Fit w={377}><b>localhost</b>:3000/myCompanyPage/010-9999-9999</Fit>
          </Url>
          <Slot $w={46}><Key /></Slot>
          <Slot $w={46}><ReadAloud /></Slot>
          <Slot $w={44}><Translate><Fit w={22}>aあ</Fit></Translate></Slot>
          <Slot $w={47}><StarAdd /></Slot>
        </Omnibox>
        <Slot $w={59}><Puzzle /></Slot>
        <Rule />
        <Slot $w={60}><Favorites /></Slot>
        <Slot $w={49}><Collections /></Slot>
        <Slot $w={66}><Avatar /></Slot>
        <Slot $w={50}><Dots /></Slot>
        <Slot $w={68}><Bing /></Slot>
      </AddressRow>

      <Body>
        <MainColumn>
          <Bookmarks>
            {bookmarks.map((b) => (
              <Bookmark key={b.label}>
                <Fav $bg={b.bg}>{b.icon}</Fav>
                <BookmarkLabel w={b.w}>{b.label}</BookmarkLabel>
              </Bookmark>
            ))}
            <Grow />
            <Line s={18} vb={18} w={1.500}><path d="M6 1.500l7.500 7.500L6 16.500" /></Line>
          </Bookmarks>
          <Viewport>
            <Page>
              <Preference label="경력우대 업종" labelW={127} scoreW={174} doneW={191} height={415} shift={-30} />
              <Preference label="우대 자격증" labelW={107} scoreW={153} doneW={173} height={415} />
              <SubmitRow>
                <PurpleButton $w={132} $h={53} $fs={19}>
                  <Fit w={76}>등록하기</Fit>
                </PurpleButton>
              </SubmitRow>
              <PageFooter />
            </Page>
            <Scrollbar>
              <Arrow $up />
              <Thumb />
              <Arrow />
            </Scrollbar>
          </Viewport>
        </MainColumn>
        <SideBar>
          <Slot $w={65} $h={52}><Magnifier /></Slot>
          <Slot $w={65} $h={51}><M365 /></Slot>
          <Slot $w={65} $h={49}><Outlook /></Slot>
          <Slot $w={65} $h={58}><Plus s={15} /></Slot>
          <SideRule />
          <Slot $w={65} $h={54}><SidePanel /></Slot>
          <Slot $w={65} $h={46}><Gear /></Slot>
        </SideBar>
      </Body>

      <Taskbar>
        <Slot $w={60}><Windows /></Slot>
        <SearchBox>
          <SearchIcon />
          <SearchText><Fit w={36}>찾기</Fit></SearchText>
          <LockArt />
        </SearchBox>
        <Slot $w={62}><TaskView /></Slot>
        {apps.map((a) => (
          <AppCell key={a.id} $active={a.active}>
            {a.icon}
            {a.tag && <ChromeTag>{a.tag}</ChromeTag>}
            {a.run && <RunMark $wide={a.active} $split={a.split} />}
          </AppCell>
        ))}
        <Grow />
        <Weather>
          <Cloudy />
          <Fit w={146}>23°C  대체로 흐림</Fit>
        </Weather>
        <Slot $w={36}>
          <Line s={18} vb={18} w={1.400}><path d="M1.500 13 9 5l7.500 8" /></Line>
        </Slot>
        <Slot $w={23}><OneDrive /></Slot>
        <Slot $w={39}><Battery /></Slot>
        <Slot $w={21}><Wifi /></Slot>
        <Slot $w={36}><Mute /></Slot>
        <Slot $w={27}><MeetCam /></Slot>
        <Slot $w={30}><Offline /></Slot>
        <Clock>
          <Fit w={62}>오후 1:59</Fit>
          <Fit w={76}>2023-05-26</Fit>
        </Clock>
        <Slot $w={58}><Notice /></Slot>
        <DesktopEdge />
      </Taskbar>
    </Screen>
  );
}
